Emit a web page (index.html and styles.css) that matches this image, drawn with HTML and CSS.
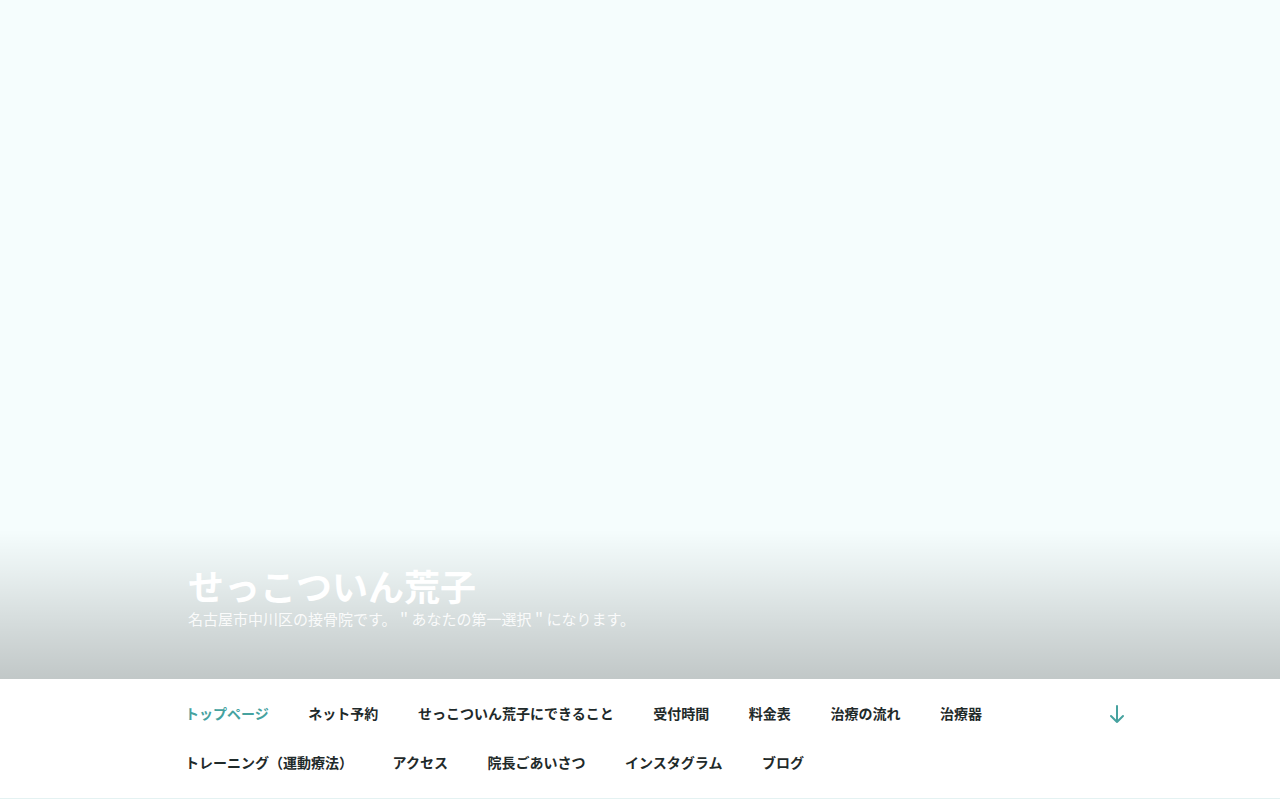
FILE: index.html
```html
<!DOCTYPE html>
<html lang="ja">
<head>
<meta charset="utf-8">
<title>せっこついん荒子</title>
<link rel="stylesheet" href="styles.css">
</head>
<body>
<header class="masthead">
  <div class="branding">
    <div class="wrap">
      <h1 class="site-title">せっこついん荒子</h1>
      <p class="site-desc">名古屋市中川区の接骨院です。＂あなたの第一選択＂になります。</p>
    </div>
  </div>
  <nav class="nav-top">
    <div class="nav-wrap">
      <ul class="menu">
        <li class="item active">トップページ</li>
        <li class="item">ネット予約</li>
        <li class="item">せっこついん荒子にできること</li>
        <li class="item">受付時間</li>
        <li class="item">料金表</li>
        <li class="item">治療の流れ</li>
        <li class="item">治療器</li>
        <li class="item">トレーニング（運動療法）</li>
        <li class="item">アクセス</li>
        <li class="item">院長ごあいさつ</li>
        <li class="item">インスタグラム</li>
        <li class="item">ブログ</li>
      </ul>
      <div class="scroll-down">
        <svg width="16" height="20" viewBox="0 0 16 20" fill="none" stroke="#46a29f" stroke-width="2" stroke-linecap="round" stroke-linejoin="round"><path d="M8 2v16M2 12l6 6 6-6"/></svg>
      </div>
    </div>
  </nav>
</header>
</body>
</html>
```

FILE: styles.css
```css
* { box-sizing: border-box; }
html, body { margin: 0; padding: 0; }
body {
  font-family: "Noto Sans CJK JP", "Noto Sans", sans-serif;
  background: #ffffff;
  color: #222;
}
.masthead { display: flex; flex-direction: column; }
.branding {
  height: 679px;
  background: #f5fdfd;
  position: relative;
  display: flex;
  flex-direction: column;
  justify-content: flex-end;
}
.branding::before {
  content: "";
  position: absolute;
  left: 0; right: 0; bottom: 0;
  height: 150px;
  background: linear-gradient(to bottom, rgba(0,0,0,0) 0%, rgba(0,0,0,0.06) 30%, rgba(0,0,0,0.15) 70%, rgba(0,0,0,0.21) 100%);
}
.wrap {
  position: relative;
  padding: 0 0 49px 188px;
}
.site-title {
  margin: 0;
  font-size: 36px;
  line-height: 42px;
  font-weight: 700;
  color: #fff;
}
.site-desc {
  margin: 2px 0 0;
  font-size: 15px;
  line-height: 22px;
  color: rgba(255,255,255,0.9);
}
.nav-top {
  background: #fff;
  border-bottom: 1px solid #e4f2f2;
}
.nav-wrap {
  display: flex;
  align-items: flex-start;
  padding: 10px 0 11px 185px;
}
.menu {
  flex: 1;
  list-style: none;
  margin: 0;
  padding: 0;
  display: flex;
  flex-wrap: wrap;
  column-gap: 39.6px;
  max-width: 900px;
}
.item {
  font-size: 14px;
  line-height: 21px;
  padding: 14px 0;
  font-weight: 700;
  color: #1f2a2a;
}
.item.active { color: #46a29f; }
.scroll-down {
  width: 16px;
  margin: 14px 155px 0 0;
  height: 21px;
  display: flex;
  align-items: center;
}
.menu { margin-right: 24px; }
.scroll-down { margin-right: 131px; }
```
